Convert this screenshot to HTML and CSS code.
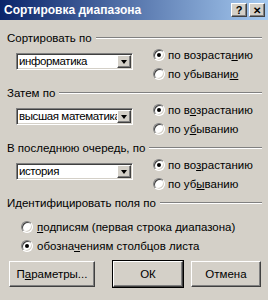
FILE: index.html
```html
<!DOCTYPE html>
<html lang="ru">
<head>
    <meta charset="UTF-8">
    <title>Сортировка диапазона</title>
    <link rel="stylesheet" href="styles.css">
</head>
<body>
    <div class="dialog">
        <div class="titlebar">
            <span class="title">Сортировка диапазона</span>
            <div class="title-buttons">
                <span class="tbtn">?</span>
                <span class="tbtn tbtn-close">✕</span>
            </div>
        </div>
        <div class="content">
            <div class="group">
                <div class="group-head"><span>Сортировать по</span><span class="etch"></span></div>
                <div class="group-row">
                    <div class="combo"><span class="combo-text">информатика</span><span class="combo-btn"><span class="arrow"></span></span></div>
                    <div class="radios">
                        <div class="radio checked"><span class="dot"></span><span>по возраста<u>н</u>ию</span></div>
                        <div class="radio"><span class="dot"></span><span>по убывани<u>ю</u></span></div>
                    </div>
                </div>
            </div>
            <div class="group">
                <div class="group-head"><span>Затем по</span><span class="etch"></span></div>
                <div class="group-row">
                    <div class="combo"><span class="combo-text">высшая математика</span><span class="combo-btn"><span class="arrow"></span></span></div>
                    <div class="radios">
                        <div class="radio checked"><span class="dot"></span><span>по в<u>о</u>зрастанию</span></div>
                        <div class="radio"><span class="dot"></span><span>по у<u>б</u>ыванию</span></div>
                    </div>
                </div>
            </div>
            <div class="group">
                <div class="group-head"><span>В последнюю очередь, по</span><span class="etch"></span></div>
                <div class="group-row">
                    <div class="combo"><span class="combo-text">история</span><span class="combo-btn"><span class="arrow"></span></span></div>
                    <div class="radios">
                        <div class="radio checked"><span class="dot"></span><span>по во<u>з</u>растанию</span></div>
                        <div class="radio"><span class="dot"></span><span>по уб<u>ы</u>ванию</span></div>
                    </div>
                </div>
            </div>
            <div class="group group-ident">
                <div class="group-head"><span>Идентифицировать поля по</span><span class="etch"></span></div>
                <div class="radios radios-wide">
                    <div class="radio"><span class="dot"></span><span><u>п</u>одписям (первая строка диапазона)</span></div>
                    <div class="radio checked"><span class="dot"></span><span>обозна<u>ч</u>ениям столбцов листа</span></div>
                </div>
            </div>
            <div class="buttons">
                <div class="btn btn-params">П<u>а</u>раметры...</div>
                <div class="btn btn-default">ОК</div>
                <div class="btn">Отмена</div>
            </div>
        </div>
    </div>
</body>
</html>
```

FILE: styles.css
```css
/* Base */
body {
    margin: 0;
    background: #d4d0c8;
    font-family: "Liberation Sans", Arial, sans-serif;
    font-size: 11.5px;
    color: #000;
}

.dialog {
    width: 268px;
    height: 300px;
    background: #d4d0c8;
}

/* Title bar */
.titlebar {
    height: 20px;
    display: flex;
    align-items: center;
    justify-content: space-between;
    padding: 0 3px 0 4px;
    background: linear-gradient(90deg, #0a246a 0%, #a6caf0 100%);
    color: #fff;
}

.title {
    font-weight: 700;
    font-size: 12px;
}

.title-buttons {
    display: flex;
    gap: 2px;
}

.tbtn {
    width: 14px;
    height: 12px;
    display: flex;
    align-items: center;
    justify-content: center;
    background: #d4d0c8;
    color: #000;
    font-weight: 700;
    font-size: 11px;
    border-top: 1px solid #fff;
    border-left: 1px solid #fff;
    border-right: 1px solid #404040;
    border-bottom: 1px solid #404040;
    box-shadow: inset -1px -1px 0 #808080;
}

.tbtn-close {
    font-size: 10px;
}

/* Content */
.content {
    padding: 12px 6px 0 7px;
}

.group + .group {
    margin-top: 4px;
}

.group-head {
    height: 12px;
    display: flex;
    align-items: center;
}

.etch {
    flex: 1;
    height: 0;
    margin-left: 4px;
    border-top: 1px solid #808080;
    border-bottom: 1px solid #fff;
}

.group-row {
    display: flex;
    align-items: flex-start;
    margin-top: 1px;
    padding-left: 9px;
}

/* Combo box */
.combo {
    width: 113px;
    height: 13px;
    margin-top: 8px;
    display: flex;
    background: #fff;
    border-top: 1px solid #808080;
    border-left: 1px solid #808080;
    border-right: 1px solid #fff;
    border-bottom: 1px solid #fff;
    box-shadow: inset 1px 1px 0 #404040, inset -1px -1px 0 #d4d0c8;
    padding: 1px;
}

.combo-text {
    flex: 1;
    overflow: hidden;
    white-space: nowrap;
    padding-left: 1px;
    line-height: 13px;
    letter-spacing: -0.4px;
}

.combo-btn {
    width: 12px;
    display: flex;
    align-items: center;
    justify-content: center;
    background: #d4d0c8;
    border-top: 1px solid #fff;
    border-left: 1px solid #fff;
    border-right: 1px solid #404040;
    border-bottom: 1px solid #404040;
    box-shadow: inset -1px -1px 0 #808080;
}

.arrow {
    width: 0;
    height: 0;
    border-left: 3.5px solid transparent;
    border-right: 3.5px solid transparent;
    border-top: 4px solid #000;
}

/* Radios */
.radios {
    margin-left: 20px;
    display: flex;
    flex-direction: column;
}

.radio {
    height: 19px;
    display: flex;
    align-items: center;
    gap: 3px;
    white-space: nowrap;
}

.group-ident {
    margin-top: 5px;
}

.radios-wide {
    margin-left: 14px;
    margin-top: 9px;
    gap: 2px;
}

.radios-wide .radio {
    height: 17px;
    gap: 4px;
}

.dot {
    width: 12px;
    height: 12px;
    box-sizing: border-box;
    border-radius: 50%;
    background: #fff;
    border: 1px solid;
    border-color: #808080 #fff #fff #808080;
    box-shadow: inset 1px 1px 0 #404040, inset -1px -1px 0 #d4d0c8;
    position: relative;
}

.radio.checked .dot::after {
    content: '';
    position: absolute;
    left: 3px;
    top: 3px;
    width: 4px;
    height: 4px;
    border-radius: 50%;
    background: #000;
}

/* Buttons */
.buttons {
    display: flex;
    margin-top: 7px;
    padding-left: 2px;
}

.btn {
    width: 68px;
    height: 24px;
    display: flex;
    align-items: center;
    justify-content: center;
    border-top: 1px solid #fff;
    border-left: 1px solid #fff;
    border-right: 1px solid #404040;
    border-bottom: 1px solid #404040;
    box-shadow: inset -1px -1px 0 #808080;
}

.btn-params {
    width: 84px;
    margin-right: 18px;
}

.btn-default {
    outline: 1px solid #000;
    margin-right: 8px;
}
```
